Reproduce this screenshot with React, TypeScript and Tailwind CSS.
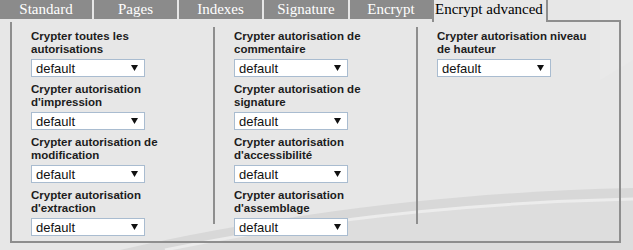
import React from 'react';

const tabs = [
  { label: 'Standard', w: 'w-[92px] mr-[2px]' },
  { label: 'Pages', w: 'w-[83px] mr-[2px]' },
  { label: 'Indexes', w: 'w-[83px] mr-[2px]' },
  { label: 'Signature', w: 'w-[84px] mr-[2px]' },
  { label: 'Encrypt', w: 'w-[82px]' },
];

const columns = [
  [
    ['Crypter toutes les', 'autorisations'],
    ['Crypter autorisation', "d'impression"],
    ['Crypter autorisation de', 'modification'],
    ['Crypter autorisation', "d'extraction"],
  ],
  [
    ['Crypter autorisation de', 'commentaire'],
    ['Crypter autorisation de', 'signature'],
    ['Crypter autorisation', "d'accessibilité"],
    ['Crypter autorisation', "d'assemblage"],
  ],
  [['Crypter autorisation niveau', 'de hauteur']],
];

function Dropdown() {
  return (
    <div className="mt-[3px] mb-[6px] flex h-[18px] w-[114px] items-center justify-between border border-[#a9bcd0] bg-white pl-[4px] pr-[6px]">
      <span className="text-[13px] leading-none text-[#111]">default</span>
      <svg width="7" height="6" viewBox="0 0 7 6">
        <polygon points="0,0 7,0 3.5,6" fill="#111" />
      </svg>
    </div>
  );
}

export default function App() {
  return (
    <div className="relative h-[250px] w-[633px] overflow-hidden bg-[#e7e7e7] font-['Liberation_Sans',Arial,sans-serif]">
      {/* background wave */}
      <svg className="absolute inset-0" width="633" height="250" viewBox="0 0 633 250">
        <path d="M600 0 L633 0 L633 60 C 620 68, 610 74, 600 80 Z" fill="#e9e9e9" />
        <path d="M120 250 C 280 214, 450 192, 633 188 L633 250 Z" fill="#d8d8d8" />
        <path d="M170 250 C 310 222, 460 204, 633 200 L633 250 Z" fill="#dddddd" />
        <path d="M165 250 C 305 221, 458 203, 633 199" stroke="#ececec" strokeWidth="3" fill="none" />
      </svg>

      <div className="relative">
        {/* Tabs */}
        <div className="flex h-[22px] items-start">
          {tabs.map((t) => (
            <div
              key={t.label}
              className={`${t.w} flex h-[19px] items-center justify-center bg-[#8b8b8b] font-['Liberation_Serif','Times_New_Roman',serif] text-[15px] leading-none text-white`}
            >
              {t.label}
            </div>
          ))}
          <div className="flex h-[22px] w-[116px] items-start border-x-2 border-[#8e8e8e] pl-[1px] pt-[2px] font-['Liberation_Serif','Times_New_Roman',serif] text-[15px] leading-none text-black">
            Encrypt advanced
          </div>
          <div className="h-[22px] w-[73px] border-b-2 border-[#8e8e8e]" />
        </div>

        {/* Panel */}
        <div className="ml-[10px] flex h-[221px] w-[611px] border-x-2 border-b-2 border-[#8e8e8e] pt-[5px]">
          {columns.map((col, i) => (
            <div
              key={i}
              className={`h-[197px] pl-[19px] pt-[3px] ${i < 2 ? 'w-[203px] border-r-2 border-[#8e8e8e]' : 'w-[201px]'}`}
            >
              {col.map((lines, j) => (
                <div key={j}>
                  <div className="text-[11.5px] font-bold leading-[13px] text-[#1c1c1c]">
                    {lines[0]}
                    <br />
                    {lines[1]}
                  </div>
                  <Dropdown />
                </div>
              ))}
            </div>
          ))}
        </div>
      </div>
    </div>
  );
}
